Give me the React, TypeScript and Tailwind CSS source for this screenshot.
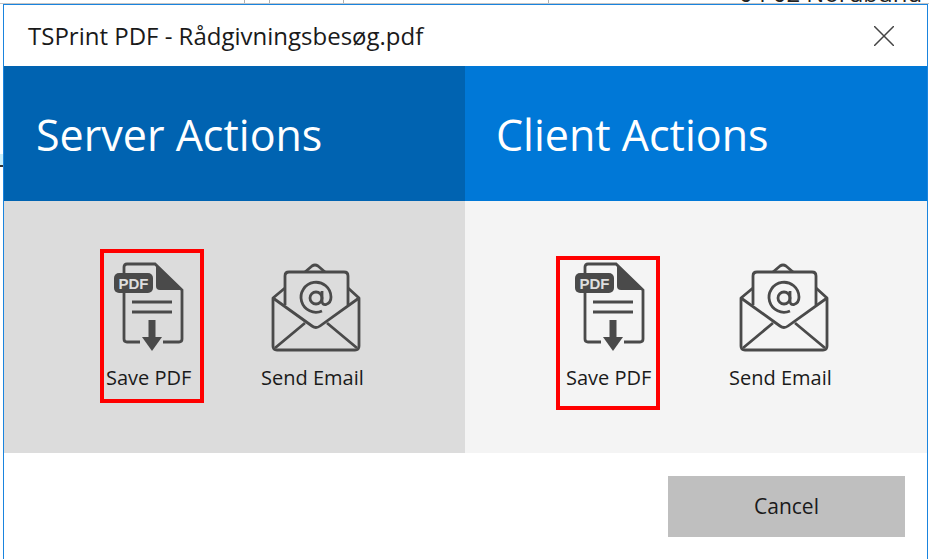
function PdfIcon() {
  return (
    <svg width="76" height="90" viewBox="0 0 76 90" fill="none" className="block">
      {/* page outline */}
      <path d="M10 11V5Q10 2 13 2H41L68 28V77Q68 80 65 80H49M26 80H13Q10 80 10 77V31" stroke="#4a4a4a" strokeWidth="2.8" />
      <path d="M42 3L68 28H46Q42 28 42 24Z" fill="#4a4a4a" />
      {/* pdf tag */}
      <rect x="0" y="11" width="39" height="20" rx="5" fill="#4a4a4a" />
      <text x="19.5" y="26.500" textAnchor="middle" fill="#dedede" fontSize="15" fontWeight="700" fontFamily="'Liberation Sans', sans-serif">PDF</text>
      <path d="M18 40H58M18 50H58" stroke="#4a4a4a" strokeWidth="2.8" />
      {/* arrow */}
      <path d="M38 58V76" stroke="#4a4a4a" strokeWidth="7" />
      <path d="M28 75H48L38 89Z" fill="#4a4a4a" />
    </svg>
  )
}

function MailIcon() {
  return (
    <svg width="90" height="90" viewBox="0 0 90 90" fill="none" className="block" stroke="#4a4a4a" strokeWidth="2.8" strokeLinejoin="round">
      <path d="M34 10L41 4Q44 2 47 4L54 10" />
      <path d="M14 43V14Q14 10 18 10H73Q77 10 77 14V43" />
      <path d="M14 26L2 36V84Q2 88 6 88H84Q88 88 88 84V36L77 26" />
      <path d="M2 36L41 64Q45 67 49 64L88 36" />
      <path d="M4 86L34 61M86 86L56 61" />
      <circle cx="45" cy="36" r="6" />
      <path d="M51 29V39Q51 43 55 42.500Q60 41 60 35A15 15 0 1 0 51 49" />
    </svg>
  )
}

function RedBox({ className, children }: { className: string; children: React.ReactNode }) {
  return (
    <div className={'w-[104px] h-[154px] shrink-0 border-4 border-[#ff0000] ' + className}>
      {children}
    </div>
  )
}

function Label({ text }: { text: string }) {
  return <div className="mt-[13px] text-[20px] leading-[26px] font-medium text-[#1a1a1a] whitespace-nowrap">{text}</div>
}

export default function App() {
  return (
    <div className="w-[929px] h-[559px] bg-white overflow-hidden flex flex-col font-['Open_Sans',sans-serif]">
      {/* strip of the page behind the dialog */}
      <div className="h-[4px] shrink-0 bg-white border-b border-[#c4c4c4] flex overflow-hidden">
        <div className="ml-[244px] w-[1px] bg-[#b0b0b0]" />
        <div className="ml-[24px] w-[1px] bg-[#b0b0b0]" />
        <div className="ml-[73px] w-[1px] bg-[#b0b0b0]" />
        <div className="ml-[204px] w-[1px] bg-[#b0b0b0]" />
        <div className="ml-[190px] -mt-[19px] text-[24px] leading-[24px] text-[#222222] whitespace-nowrap">04 02 Nordbund</div>
      </div>

      <div className="flex-1 flex min-h-0">
        {/* behind the dialog on the left */}
        <div className="w-[3px] shrink-0 flex flex-col pt-[150px]">
          <div className="h-[11px] bg-[#c8eefa]" />
          <div className="h-[2px] bg-[#333333]" />
        </div>

        <div className="flex-1 mr-[1px] border border-b-0 border-[#1a84de] flex flex-col">
          <div className="h-[61px] shrink-0 flex items-center justify-between pl-[24px] pr-[33px]">
            <span className="text-[24px] text-[#1a1a1a]">TSPrint PDF - Rådgivningsbesøg.pdf</span>
            <svg width="20" height="20" viewBox="0 0 20 20" stroke="#444444" strokeWidth="1.500">
              <path d="M0 0L20 20M20 0L0 20" />
            </svg>
          </div>

          <div className="flex h-[135px] shrink-0 text-white text-[43px] pt-[3px]">
            <div className="w-[461px] -mt-[3px] pt-[3px] bg-[#0063b1] flex items-center pl-[32px]">Server Actions</div>
            <div className="flex-1 -mt-[3px] pt-[3px] bg-[#0078d7] flex items-center pl-[31px]">Client Actions</div>
          </div>

          <div className="flex h-[252px] shrink-0">
            <div className="w-[461px] bg-[#dcdcdc] flex items-start pl-[96px] pt-[48px] gap-[57px]">
              <RedBox className="pl-[10px] pt-[9px]">
                <PdfIcon />
                <div className="-ml-[8px]"><Label text="Save PDF" /></div>
              </RedBox>
              <div className="mt-[13px]">
                <div className="ml-[10px]"><MailIcon /></div>
                <Label text="Send Email" />
              </div>
            </div>
            <div className="flex-1 bg-[#f4f4f4] flex items-start pl-[91px] pt-[55px] gap-[69px]">
              <RedBox className="pl-[15px] pt-[2px]">
                <PdfIcon />
                <div className="-ml-[9px]"><Label text="Save PDF" /></div>
              </RedBox>
              <div className="mt-[6px]">
                <div className="ml-[10px]"><MailIcon /></div>
                <Label text="Send Email" />
              </div>
            </div>
          </div>

          <div className="flex-1 flex justify-end items-start pt-[23px] pr-[22px]">
            <button className="w-[237px] h-[61px] bg-[#bfbfbf] text-[21px] text-[#1a1a1a]">Cancel</button>
          </div>
        </div>
      </div>
    </div>
  )
}
